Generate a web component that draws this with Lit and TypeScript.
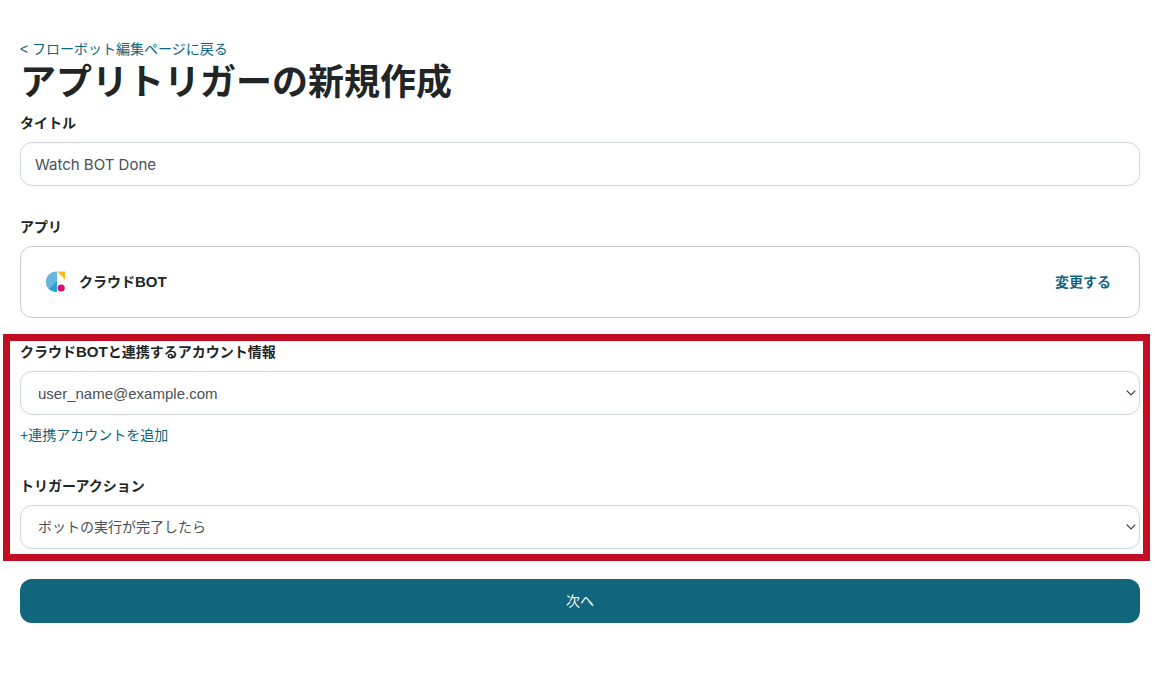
import { LitElement, html, css } from "lit";
import { customElement, state } from "lit/decorators.js";

const chevron = html`<svg class="chevron" viewBox="0 0 10 6" aria-hidden="true">
  <path d="M1 .8l4 4 4-4" fill="none" stroke="#33383e" stroke-width="1.1" stroke-linecap="round" stroke-linejoin="round" />
</svg>`;

@customElement("app-root")
export class AppRoot extends LitElement {
  static styles = css`
    :host {
      display: block;
      font-family: "Liberation Sans", "Noto Sans CJK JP", sans-serif;
      font-size: 14px;
      line-height: 21px;
      color: #212525;
      background: #fff;
    }
    * {
      box-sizing: border-box;
    }
    .page {
      display: flex;
      flex-direction: column;
      padding: 39px 15px 48px 20px;
    }
    a {
      color: #11657c;
      text-decoration: none;
      align-self: flex-start;
    }
    h1 {
      margin: 0 0 8px;
      font-size: 36px;
      line-height: 45px;
      font-weight: 700;
    }
    .field {
      display: flex;
      flex-direction: column;
    }
    .label {
      margin-bottom: 8px;
      font-weight: 700;
    }
    .latin {
      font-size: 15px;
      line-height: 15px;
    }
    .control {
      width: 100%;
      height: 44px;
      margin: 0;
      padding: 0 14px;
      border: 1px solid #ced4da;
      border-radius: 12px;
      background: #fff;
      color: #495057;
      font: inherit;
    }
    .text {
      font-family: Inter, "Noto Sans CJK JP", sans-serif;
      font-size: 15px;
    }
    .app {
      margin-top: 31px;
    }
    .card {
      display: flex;
      align-items: center;
      gap: 12px;
      height: 72px;
      padding: 0 28px 0 24px;
      border: 1px solid #ccc;
      border-radius: 12px;
      font-weight: 700;
    }
    .logo {
      width: 22px;
      height: 22px;
    }
    .name {
      flex: 1;
    }
    .change {
      padding: 0;
      border: 0;
      background: none;
      color: #11657c;
      font: inherit;
      cursor: pointer;
    }
    .highlight {
      display: flex;
      flex-direction: column;
      margin: 16px -10px 18px -17px;
      padding: 1px 3px 5px 10px;
      border: 7px solid #c30d23;
    }
    .action {
      margin-top: 30px;
    }
    .add {
      margin-top: 10px;
    }
    .picker {
      display: grid;
      align-items: center;
    }
    .picker > * {
      grid-area: 1 / 1;
    }
    .select {
      appearance: none;
      padding: 0 24px 0 17px;
    }
    .account {
      font-size: 15px;
    }
    .chevron {
      justify-self: end;
      width: 10px;
      height: 6px;
      margin-right: 4px;
      pointer-events: none;
    }
    .next {
      height: 44px;
      border: 0;
      border-radius: 12px;
      background: #11657c;
      color: #fff;
      font: inherit;
      cursor: pointer;
    }
  `;

  @state() private name = "Watch BOT Done";

  render() {
    return html`
      <main class="page">
        <a href="#">&lt; フローボット編集ページに戻る</a>
        <h1>アプリトリガーの新規作成</h1>

        <div class="field">
          <label class="label" for="title">タイトル</label>
          <input
            class="control text"
            id="title"
            type="text"
            .value=${this.name}
            @input=${(e: Event) => (this.name = (e.target as HTMLInputElement).value)}
          />
        </div>

        <div class="field app">
          <div class="label">アプリ</div>
          <div class="card">
            <svg class="logo" viewBox="0 0 22 22" aria-hidden="true">
              <path d="M12 .5V21h-1A10.250 10.250 0 0 1 11 .5z" fill="#67b6e0" />
              <path d="M12 10v11h-1a10 10 0 0 1-7-3z" fill="#27a0d6" />
              <path d="M12 .5h8v8z" fill="#f3b928" />
              <circle cx="16.2" cy="17" r="3.6" fill="#d90f6c" />
            </svg>
            <span class="name">クラウド<span class="latin">BOT</span></span>
            <button class="change" type="button">変更する</button>
          </div>
        </div>

        <section class="highlight">
          <div class="field">
            <label class="label" for="account"
              >クラウド<span class="latin">BOT</span>と連携するアカウント情報</label
            >
            <div class="picker">
              <select class="control select account" id="account">
                <option>user_name@example.com</option>
              </select>
              ${chevron}
            </div>
          </div>
          <a class="add" href="#">+連携アカウントを追加</a>
          <div class="field action">
            <label class="label" for="action">トリガーアクション</label>
            <div class="picker">
              <select class="control select" id="action">
                <option>ボットの実行が完了したら</option>
              </select>
              ${chevron}
            </div>
          </div>
        </section>

        <button class="next" type="button">次へ</button>
      </main>
    `;
  }
}
